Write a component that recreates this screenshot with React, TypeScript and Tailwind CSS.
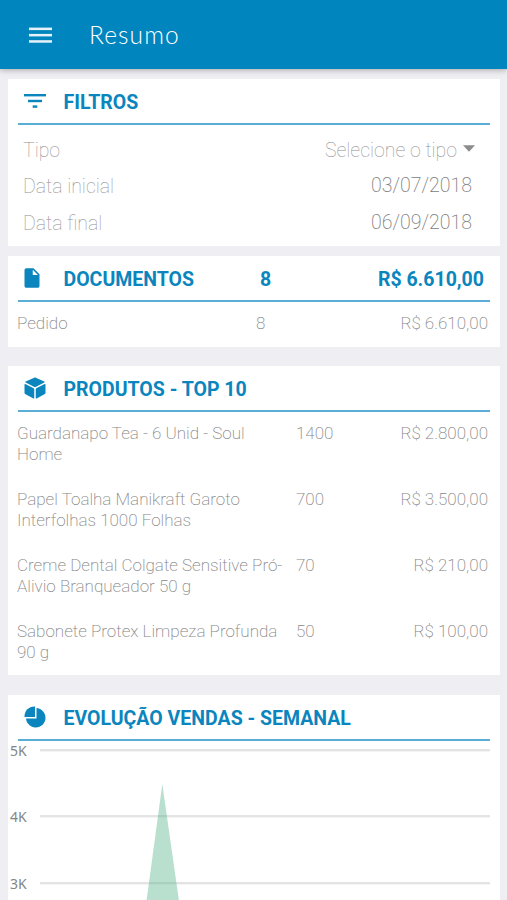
import type { ReactNode } from "react";
import { IoMdDocument, IoMdCube, IoMdPie } from "react-icons/io";

function MenuIcon() {
  return (
    <svg className="block h-4 w-[23px]" viewBox="0 0 23 16" fill="#fff" fillOpacity="0.9">
      <rect x="0" y="0.6" width="23" height="2.5" />
      <rect x="0" y="6.9" width="23" height="2.5" />
      <rect x="0" y="13.2" width="23" height="2.5" />
    </svg>
  );
}

function FilterIcon() {
  return (
    <svg className="block h-[14px] w-[22px]" viewBox="0 0 22 14" fill="currentColor">
      <rect x="0" y="0" width="22" height="2.4" />
      <rect x="4" y="5.8" width="14" height="2.4" />
      <rect x="8.7" y="11.4" width="4.6" height="2.4" />
    </svg>
  );
}

function CardHeader({ icon, children }: { icon: ReactNode; children: ReactNode }) {
  return (
    <div className="mx-[10px] flex h-[46px] items-center border-b-2 border-[#5aaed6] pl-[6px] pt-[3px] text-[19.5px] font-bold text-[#0a85bd]">
      <div className="-mt-[3px] flex w-[39.5px] shrink-0 items-center">{icon}</div>
      {children}
    </div>
  );
}

const products = [
  { lines: ["Guardanapo Tea - 6 Unid - Soul", "Home"], qty: "1400", total: "R$ 2.800,00" },
  { lines: ["Papel Toalha Manikraft Garoto", "Interfolhas 1000 Folhas"], qty: "700", total: "R$ 3.500,00" },
  { lines: ["Creme Dental Colgate Sensitive Pró-", "Alivio Branqueador 50 g"], qty: "70", total: "R$ 210,00" },
  { lines: ["Sabonete Protex Limpeza Profunda", "90 g"], qty: "50", total: "R$ 100,00" },
];

export default function App() {
  return (
    <div className="flex h-[900px] w-[507px] flex-col overflow-hidden bg-[#eeeef3] font-['Roboto','Liberation_Sans',sans-serif]">
      <header className="flex h-[69px] shrink-0 items-center bg-[#0085be] pl-[29px] pt-px shadow-[0_1px_6px_rgba(0,0,0,0.3)]">
        <MenuIcon />
        <h1 className="ml-[37px] font-['Lato',sans-serif] text-[24.5px] font-light tracking-[1.1px] text-white">Resumo</h1>
      </header>

      <main className="flex flex-col pl-2 pr-[7px] pt-[10px]">
        <section className="h-[167px] bg-white">
          <CardHeader icon={<FilterIcon />}>
            <span>FILTROS</span>
          </CardHeader>
          <div className="flex flex-col pl-[15px] pr-[28px] pt-[7px] text-[19.5px] font-thin text-[#8f8f8f]">
            <div className="flex h-[36px] items-center justify-between pt-px">
              <span>Tipo</span>
              <span className="-mr-[3px] flex items-center">
                <span>Selecione o tipo</span>
                <svg className="mb-[4px] ml-[6px] h-[7px] w-3" viewBox="0 0 12 7" fill="#8c8c8c">
                  <path d="M0 0.3h12L6 6.7z" />
                </svg>
              </span>
            </div>
            <div className="flex h-[37px] items-center justify-between">
              <span>Data inicial</span>
              <span className="-mt-px font-extralight text-[#7c7c7c]">03/07/2018</span>
            </div>
            <div className="flex h-[37px] items-center justify-between">
              <span>Data final</span>
              <span className="-mt-px font-extralight text-[#7c7c7c]">06/09/2018</span>
            </div>
          </div>
        </section>

        <section className="mt-[10px] h-[91px] bg-white">
          <CardHeader icon={<IoMdDocument className="-ml-1 size-6" />}>
            <span className="w-[196.5px]">DOCUMENTOS</span>
            <span>8</span>
            <span className="ml-auto mr-[6px]">R$ 6.610,00</span>
          </CardHeader>
          <div className="flex h-[42px] items-center pl-[9px] pr-3 pt-[2px] text-[17px] font-extralight text-[#858585]">
            <span className="w-[239px]">Pedido</span>
            <span>8</span>
            <span className="ml-auto">R$ 6.610,00</span>
          </div>
        </section>

        <section className="mt-[19px] h-[309px] bg-white">
          <CardHeader icon={<IoMdCube className="-ml-px size-6" />}>
            <span>PRODUTOS - TOP 10</span>
          </CardHeader>
          <div className="flex flex-col gap-6 pl-[9px] pr-3 pt-[11px] text-[17px] leading-[21px] font-extralight text-[#858585]">
            {products.map((p) => (
              <div key={p.qty} className="flex h-[42px]">
                <div className="flex w-[279px] flex-col whitespace-nowrap">
                  {p.lines.map((line) => (
                    <span key={line}>{line}</span>
                  ))}
                </div>
                <span>{p.qty}</span>
                <span className="ml-auto">{p.total}</span>
              </div>
            ))}
          </div>
        </section>

        <section className="mt-5 h-[205px] bg-white">
          <CardHeader icon={<IoMdPie className="-ml-px size-6" />}>
            <span>EVOLUÇÃO VENDAS - SEMANAL</span>
          </CardHeader>
          <svg className="block h-[160px] w-[492px]" viewBox="0 0 492 160">
            <g fill="#e4e4e4">
              <rect x="32" y="8" width="450" height="2.4" />
              <rect x="32" y="74" width="450" height="2.4" />
              <rect x="32" y="141" width="450" height="2.4" />
            </g>
            <path d="M154.3 43L138.5 160h32.5z" fill="#57b68a" fillOpacity="0.42" />
            <g fill="#858585" fontSize="14" fontFamily="'Noto Sans', sans-serif">
              <text x="2" y="15">5K</text>
              <text x="2" y="81">4K</text>
              <text x="2" y="148">3K</text>
            </g>
          </svg>
        </section>
      </main>
    </div>
  );
}
